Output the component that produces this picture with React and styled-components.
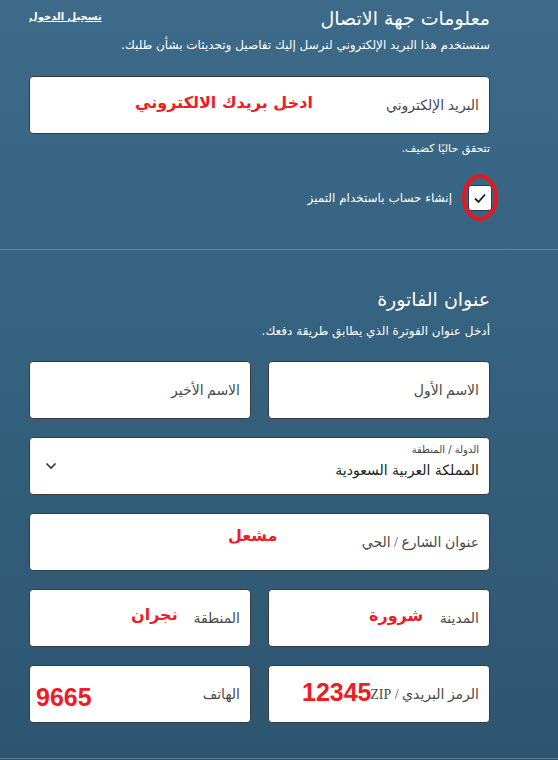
import React from "react";
import styled, { createGlobalStyle } from "styled-components";

const Global = createGlobalStyle`
  html, body { margin: 0; padding: 0; }
  body {
    width: 558px;
    height: 760px;
    overflow: hidden;
    background: linear-gradient(180deg, #3d6a89 0%, #35627f 45%, #2d5570 100%);
    font-family: "DejaVu Sans", "Liberation Sans", sans-serif;
  }
`;

const Page = styled.div`
  direction: rtl;
  width: 558px;
  height: 760px;
  color: #fff;
`;

const Section = styled.section`
  padding: ${(p) => p.$pad};
  border-bottom: 1px solid rgba(255, 255, 255, 0.22);
  display: flex;
  flex-direction: column;
`;

const Inner = styled.div`
  padding-right: 68px;
  padding-left: 29px;
  display: flex;
  flex-direction: column;
`;

const HeaderRow = styled.div`
  display: flex;
  justify-content: space-between;
  align-items: center;
  height: 30px;
`;

const Title = styled.h2`
  margin: 0;
  font-size: 19px;
  font-weight: normal;
  line-height: 30px;
  color: #fff;
`;

const LoginLink = styled.a`
  font-size: 10px;
  font-weight: bold;
  color: #fff;
  text-decoration: underline;
  margin-top: -3px;
`;

const Sub = styled.p`
  margin: ${(p) => p.$mt || 2}px 0 0;
  font-size: 12px;
  line-height: 20px;
  color: #fff;
`;

const Note = styled.p`
  margin: 7px 0 0;
  font-size: 11px;
  line-height: 16px;
  color: #fff;
`;

const Field = styled.div`
  position: relative;
  box-sizing: border-box;
  height: 58px;
  background: #fff;
  border: 1px solid #3a3a3a;
  border-radius: 4px;
  padding: 0 10px;
  display: flex;
  align-items: center;
  margin-top: ${(p) => p.$mt || 0}px;
`;

const Label = styled.span`
  font-family: "Liberation Serif", "DejaVu Sans", serif;
  font-size: 14px;
  color: #4a4a4a;
`;

const Annot = styled.span`
  position: absolute;
  left: ${(p) => p.$x}px;
  top: ${(p) => p.$y}px;
  color: #ee1c25;
  font-weight: bold;
  font-family: ${(p) => (p.$num ? '"Liberation Sans", Arial, sans-serif' : '"DejaVu Sans", sans-serif')};
  font-size: ${(p) => p.$size}px;
  line-height: 1;
  white-space: nowrap;
  direction: rtl;
`;

const CheckRow = styled.div`
  margin-top: 17px;
  display: flex;
  align-items: center;
  gap: 10px;
  height: 47px;
`;

const CheckWrap = styled.div`
  position: relative;
  width: 36px;
  height: 47px;
  display: flex;
  align-items: center;
  justify-content: center;
  margin-right: -8px;
`;

const CheckBox = styled.div`
  box-sizing: border-box;
  width: 24px;
  height: 26px;
  background: #fff;
  border: 1px solid #2f3b44;
  border-radius: 3px;
  display: flex;
  align-items: center;
  justify-content: center;
`;

const Ring = styled.div`
  position: absolute;
  inset: 0;
  border: 4px solid #e8161e;
  border-radius: 50%;
  box-sizing: border-box;
`;

const CheckLabel = styled.span`
  font-size: 12px;
  color: #fff;
`;

const Grid = styled.div`
  display: grid;
  grid-template-columns: 1fr 1fr;
  column-gap: 17px;
  margin-top: ${(p) => p.$mt || 18}px;
`;

const Select = styled(Field)`
  flex-direction: column;
  align-items: flex-start;
  justify-content: flex-start;
  padding-top: 5px;
  gap: 3px;
`;

const SmallLabel = styled.span`
  font-size: 10px;
  line-height: 14px;
  color: #444;
`;

const SelectValue = styled.span`
  font-size: 14px;
  line-height: 20px;
  color: #222;
`;

const Chevron = styled.svg`
  position: absolute;
  left: 15px;
  top: 24px;
`;

export default function App() {
  return (
    <Page>
      <Global />
      <Section $pad="3px 0 28px">
        <Inner>
          <HeaderRow>
            <Title>معلومات جهة الاتصال</Title>
            <LoginLink href="#">تسجيل الدخول</LoginLink>
          </HeaderRow>
          <Sub>سنستخدم هذا البريد الإلكتروني لنرسل إليك تفاصيل وتحديثات بشأن طلبك.</Sub>
          <Field $mt={21}>
            <Label>البريد الإلكتروني</Label>
            <Annot $x={105} $y={18} $size={16}>ادخل بريدك الالكتروني</Annot>
          </Field>
          <Note>تتحقق حاليًا كضيف.</Note>
          <CheckRow>
            <CheckWrap>
              <CheckBox>
                <svg width="14" height="12" viewBox="0 0 14 12">
                  <path d="M2 6.5 L5.5 10 L12 2.5" fill="none" stroke="#1e1e1e" strokeWidth="1.8" />
                </svg>
              </CheckBox>
              <Ring />
            </CheckWrap>
            <CheckLabel>إنشاء حساب باستخدام التميز</CheckLabel>
          </CheckRow>
        </Inner>
      </Section>
      <Section $pad="34px 0 35px">
        <Inner>
          <Title>عنوان الفاتورة</Title>
          <Sub $mt={7}>أدخل عنوان الفوترة الذي يطابق طريقة دفعك.</Sub>
          <Grid $mt={20}>
            <Field>
              <Label>الاسم الأول</Label>
            </Field>
            <Field>
              <Label>الاسم الأخير</Label>
            </Field>
          </Grid>
          <Select $mt={18}>
            <SmallLabel>الدولة / المنطقة</SmallLabel>
            <SelectValue>المملكة العربية السعودية</SelectValue>
            <Chevron width="12" height="8" viewBox="0 0 12 8">
              <path d="M1.5 1.5 L6 6 L10.5 1.5" fill="none" stroke="#333" strokeWidth="1.6" />
            </Chevron>
          </Select>
          <Field $mt={18}>
            <Label>عنوان الشارع / الحي</Label>
            <Annot $x={198} $y={14} $size={16}>مشعل</Annot>
          </Field>
          <Grid>
            <Field>
              <Label>المدينة</Label>
              <Annot $x={100} $y={18} $size={16}>شرورة</Annot>
            </Field>
            <Field>
              <Label>المنطقة</Label>
              <Annot $x={101} $y={17} $size={16}>نجران</Annot>
            </Field>
          </Grid>
          <Grid>
            <Field>
              <Label>الرمز البريدي / ZIP</Label>
              <Annot $num $x={33} $y={14} $size={25}>12345</Annot>
            </Field>
            <Field>
              <Label>الهاتف</Label>
              <Annot $num $x={6} $y={19} $size={25}>9665</Annot>
            </Field>
          </Grid>
        </Inner>
      </Section>
    </Page>
  );
}
